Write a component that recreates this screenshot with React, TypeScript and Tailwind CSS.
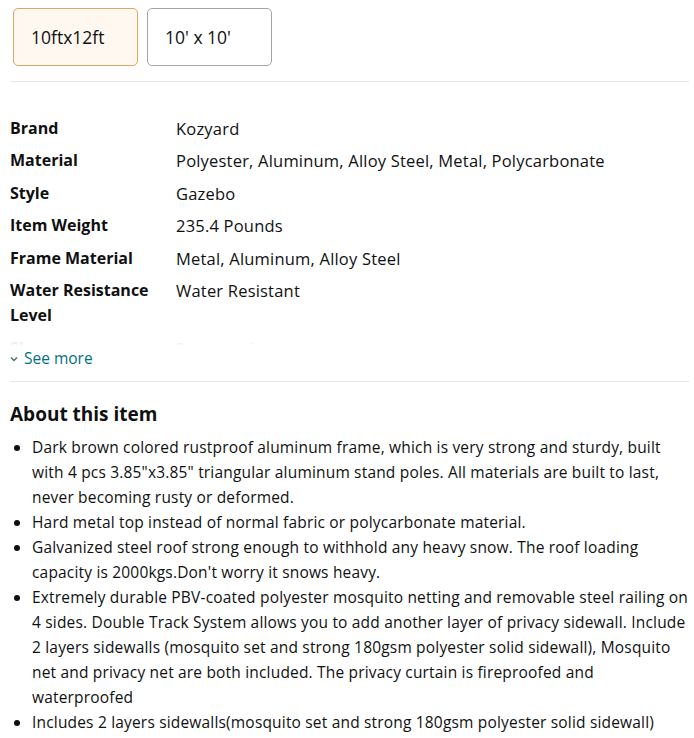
import React from 'react'

const SPECS: { label: string; value: string }[] = [
  { label: 'Brand', value: 'Kozyard' },
  { label: 'Material', value: 'Polyester, Aluminum, Alloy Steel, Metal, Polycarbonate' },
  { label: 'Style', value: 'Gazebo' },
  { label: 'Item Weight', value: '235.4 Pounds' },
  { label: 'Frame Material', value: 'Metal, Aluminum, Alloy Steel' },
  { label: 'Water Resistance Level', value: 'Water Resistant' },
  { label: 'Shape', value: 'Rectangular' },
]

const BULLETS = [
  'Dark brown colored rustproof aluminum frame, which is very strong and sturdy, built with 4 pcs 3.85"x3.85" triangular aluminum stand poles. All materials are built to last, never becoming rusty or deformed.',
  'Hard metal top instead of normal fabric or polycarbonate material.',
  "Galvanized steel roof strong enough to withhold any heavy snow. The roof loading capacity is 2000kgs.Don't worry it snows heavy.",
  'Extremely durable PBV-coated polyester mosquito netting and removable steel railing on 4 sides. Double Track System allows you to add another layer of privacy sidewall. Include 2 layers sidewalls (mosquito set and strong 180gsm polyester solid sidewall), Mosquito net and privacy net are both included. The privacy curtain is fireproofed and waterproofed',
  'Includes 2 layers sidewalls(mosquito set and strong 180gsm polyester solid sidewall)',
]

export default function App() {
  return (
    <div className="w-[694px] h-[738px] overflow-hidden bg-white pl-[10px] pr-[4px] text-[#0f1111] font-['Open_Sans','Liberation_Sans',sans-serif]">
      <div className="flex gap-[9px] pt-[8px] pl-[3px]">
        <button className="h-[58px] w-[125px] rounded-[5px] border border-[#d9a760] bg-[#fef8f0] pl-[17px] text-left text-[17.5px]">
          10ftx12ft
        </button>
        <button className="h-[58px] w-[125px] rounded-[5px] border border-[#a2a6ac] bg-white pl-[17px] text-left text-[17.5px]">
          10' x 10'
        </button>
      </div>

      <div className="mt-[15px] mr-[1px] h-px bg-[#e7e7e7]" />

      {/* spec table, clipped with a fade before "See more" */}
      <div className="relative mt-[30px] h-[234px] overflow-hidden">
        {SPECS.map((s) => (
          <div key={s.label} className="flex py-[3.75px] leading-[25px]">
            <div className="w-[166px] shrink-0 pr-[10px] text-[16px] font-bold">{s.label}</div>
            <div className="text-[16.5px] tracking-[0.2px]">{s.value}</div>
          </div>
        ))}
        <div className="absolute inset-x-0 bottom-0 h-[12px] bg-gradient-to-b from-white/70 to-white" />
      </div>

      <button className="mt-[2px] flex items-center gap-[6px] text-[15.5px] leading-[20px] text-[#007185]">
        <svg width="8" height="6" viewBox="0 0 8 6" className="mt-[2px]">
          <path d="M1 1.5 L4 4.5 L7 1.5" fill="none" stroke="#4f6b73" strokeWidth="1.4" />
        </svg>
        See more
      </button>

      <div className="mt-[13px] mr-[1px] h-px bg-[#e7e7e7]" />

      <h2 className="mt-[19px] text-[19px] font-bold leading-[26px]">About this item</h2>

      <ul className="mt-[8px] list-disc pl-[22px] text-[15.5px] leading-[25px] tracking-[0.18px] marker:text-[#0f1111]">
        {BULLETS.map((b, i) => (
          <li key={i}>{b}</li>
        ))}
      </ul>
    </div>
  )
}
